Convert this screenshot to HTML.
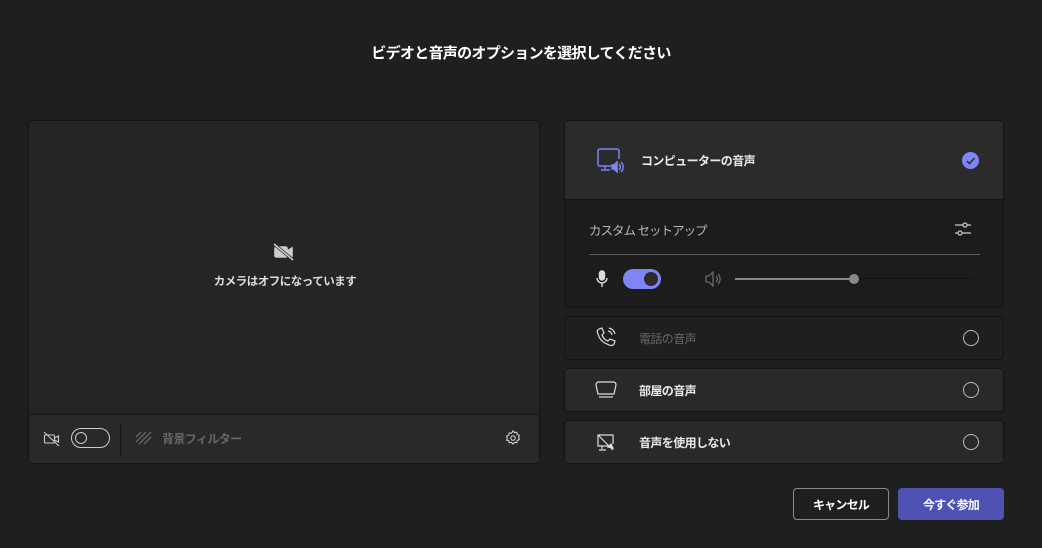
<!DOCTYPE html><html><head><meta charset="utf-8"><style>
*{box-sizing:border-box;margin:0;padding:0}
body{width:1042px;height:548px;background:#1f1f1f;font-family:"Liberation Sans","Noto Sans CJK JP",sans-serif;color:#fff;position:relative;overflow:hidden}
.abs{position:absolute}
h1{position:absolute;top:42px;left:0;width:1042px;text-align:center;font-size:15px;letter-spacing:-0.7px;font-weight:bold}
.vid{left:28px;top:120px;width:512px;height:344px;background:#252525;border:1px solid #141414;border-radius:4px;overflow:hidden}
.bar{position:absolute;left:0;right:0;bottom:0;height:49px;background:#292929;border-top:1px solid #141414}
.card{left:564px;width:440px;border:1px solid #141414;border-radius:4px;background:#292929}
.t{font-size:12px;letter-spacing:-0.6px;font-weight:bold;color:#e8e8e8}
.radio{position:absolute;right:24px;top:13px;width:16px;height:16px;border:1px solid #bdbdbd;border-radius:50%}
.btn{top:488px;height:32px;border-radius:4px;font-size:12px;letter-spacing:-0.8px;font-weight:bold;display:flex;align-items:center;justify-content:center}
</style></head><body>
<h1>ビデオと音声のオプションを選択してください</h1>
<div class="abs vid">
 <svg class="abs" style="left:244px;top:122px" width="22" height="18" viewBox="0 0 22 18" fill="none" stroke="#ccc" stroke-width="1.6"><rect x="2" y="4" width="12" height="10" rx="1.5" fill="#ccc"/><path d="M14 8l5-3v8l-5-3" fill="#ccc"/><path d="M1 1l19 16" stroke="#252525" stroke-width="3"/><path d="M1 1l19 16"/></svg>
 <div class="abs" style="left:0;width:512px;top:152px;text-align:center;font-size:11.5px;letter-spacing:-0.5px;font-weight:bold;color:#ddd">カメラはオフになっています</div>
 <div class="bar">
  <svg class="abs" style="left:14px;top:16px" width="18" height="16" viewBox="0 0 18 16" fill="none" stroke="#ccc" stroke-width="1.1"><rect x="1.5" y="4" width="10" height="8" rx="1"/><path d="M11.5 7l4-2v6l-4-2"/><path d="M1 1l15 14"/></svg>
  <div class="abs" style="left:42px;top:13px;width:39px;height:20px;border:1px solid #ccc;border-radius:10px"><div class="abs" style="left:3px;top:3px;width:12px;height:12px;border:1px solid #ccc;border-radius:50%"></div></div>
  <div class="abs" style="left:91px;top:9px;width:1px;height:32px;background:#141414"></div>
  <svg class="abs" style="left:106px;top:16px" width="18" height="14" viewBox="0 0 18 14" stroke="#666" stroke-width="1.3" fill="none"><path d="M1 6l5-5M1 11l10-10M4 13l12-12M9 13l7-7"/></svg>
  <div class="abs" style="left:133px;top:15px;font-size:12px;letter-spacing:-0.6px;color:#666;font-weight:bold">背景フィルター</div>
  <svg class="abs" style="left:475px;top:14px" width="18" height="18" viewBox="0 0 24 24" fill="none" stroke="#ccc" stroke-width="1.5"><circle cx="12" cy="12" r="3"/><path d="M12 2.5l2 2.3 3-.5.7 3 2.8 1.2-1 2.8 1 2.8-2.8 1.2-.7 3-3-.5-2 2.3-2-2.3-3 .5-.7-3L3.5 15l1-2.8-1-2.8 2.8-1.2.7-3 3 .5z"/></svg>
 </div>
</div>
<div class="abs card" style="top:120px;height:188px;background:#1c1c1c;overflow:hidden">
 <div class="abs" style="left:0;top:0;width:440px;height:79px;background:#2b2b2b;border-bottom:1px solid #141414"></div>
 <svg class="abs" style="left:31px;top:27px" width="28" height="28" viewBox="0 0 28 28" fill="none" stroke="#7f85f5" stroke-width="1.5"><path d="M15 18H4a2 2 0 0 1-2-2V3a2 2 0 0 1 2-2h17a2 2 0 0 1 2 2v8"/><path d="M9 18v3M5 22h9"/><path d="M16 17h2l3-3v10l-3-3h-2z" fill="#7f85f5"/><path d="M23 16a4 4 0 0 1 0 6M25 14a7 7 0 0 1 0 10"/></svg>
 <div class="abs t" style="left:76px;top:31px">コンピューターの音声</div>
 <div class="abs" style="left:397px;top:31px;width:17px;height:17px;border-radius:50%;background:#7f85f5"><svg width="17" height="17" viewBox="0 0 17 17" fill="none" stroke="#2b2b2b" stroke-width="1.5"><path d="M5 9l2.5 2.5L12.5 6"/></svg></div>
 <div class="abs" style="left:24px;top:99px;font-size:12.5px;letter-spacing:-1px;color:#b5b5b5">カスタム セットアップ</div>
 <svg class="abs" style="left:389px;top:100px" width="18" height="16" viewBox="0 0 18 16" fill="none" stroke="#ccc" stroke-width="1.2"><path d="M1 4h16M1 12h16"/><circle cx="11" cy="4" r="2" fill="#1c1c1c"/><circle cx="6" cy="12" r="2" fill="#1c1c1c"/></svg>
 <div class="abs" style="left:24px;top:133px;width:391px;height:1px;background:#5a5a5a"></div>
 <svg class="abs" style="left:31px;top:149px" width="12" height="18" viewBox="0 0 12 18" fill="none" stroke="#ddd" stroke-width="1.4"><rect x="3.5" y="1" width="5" height="9" rx="2.5" fill="#ddd"/><path d="M1 8a5 5 0 0 0 10 0M6 13v4"/></svg>
 <div class="abs" style="left:58px;top:148px;width:38px;height:20px;border-radius:10px;background:#7f85f5"><div class="abs" style="left:21px;top:3px;width:14px;height:14px;border-radius:50%;background:#2b2b2b"></div></div>
 <svg class="abs" style="left:140px;top:150px" width="18" height="16" viewBox="0 0 18 16" fill="none" stroke="#777" stroke-width="1.1"><path d="M1 5h3l4-4v14l-4-4H1z"/><path d="M11 5a4 4 0 0 1 0 6M13 3a7 7 0 0 1 0 10"/></svg>
 <div class="abs" style="left:170px;top:157px;width:120px;height:2px;background:#888"></div>
 <div class="abs" style="left:290px;top:157px;width:118px;height:1px;background:#111"></div>
 <div class="abs" style="left:284px;top:153px;width:10px;height:10px;border-radius:50%;background:#888"></div>
</div>
<div class="abs card" style="top:316px;height:44px;background:#1f1f1f">
 <svg class="abs" style="left:30px;top:10px" width="22" height="22" viewBox="0 0 22 22" fill="none" stroke="#ddd" stroke-width="1.2"><path d="M4 2l3-1 2 5-2 2c1 3 3 5 6 6l2-2 5 2-1 3c-1 2-4 2-7 0C7 15 4 11 3 7 2 5 2 3 4 2z"/><path d="M13 4a5 5 0 0 1 4 4M14 1a8 8 0 0 1 6 6"/></svg>
 <div class="abs t" style="left:74px;top:13px;color:#666;font-weight:normal">電話の音声</div>
 <div class="radio"></div>
</div>
<div class="abs card" style="top:368px;height:44px">
 <svg class="abs" style="left:30px;top:11px" width="22" height="20" viewBox="0 0 22 20" fill="none" stroke="#ddd" stroke-width="1.2"><path d="M4 2h14c2 0 3 1 3 3l-2 9H3L1 5c0-2 1-3 3-3z"/><path d="M4 17h14"/></svg>
 <div class="abs t" style="left:74px;top:13px">部屋の音声</div>
 <div class="radio"></div>
</div>
<div class="abs card" style="top:420px;height:44px">
 <svg class="abs" style="left:31px;top:12px" width="20" height="20" viewBox="0 0 20 20" fill="none" stroke="#ddd" stroke-width="1.2"><path d="M13 13H2V2h15v9"/><path d="M6 13v3M3 17h7"/><path d="M2 2l15 15"/><path d="M12 14l3-3 2 4z" fill="#ddd"/></svg>
 <div class="abs t" style="left:74px;top:13px">音声を使用しない</div>
 <div class="radio"></div>
</div>
<div class="abs btn" style="left:793px;width:96px;border:1px solid #8a8a8a;background:#1f1f1f">キャンセル</div>
<div class="abs btn" style="left:898px;width:106px;background:#4f52b2">今すぐ参加</div>
</body></html>
